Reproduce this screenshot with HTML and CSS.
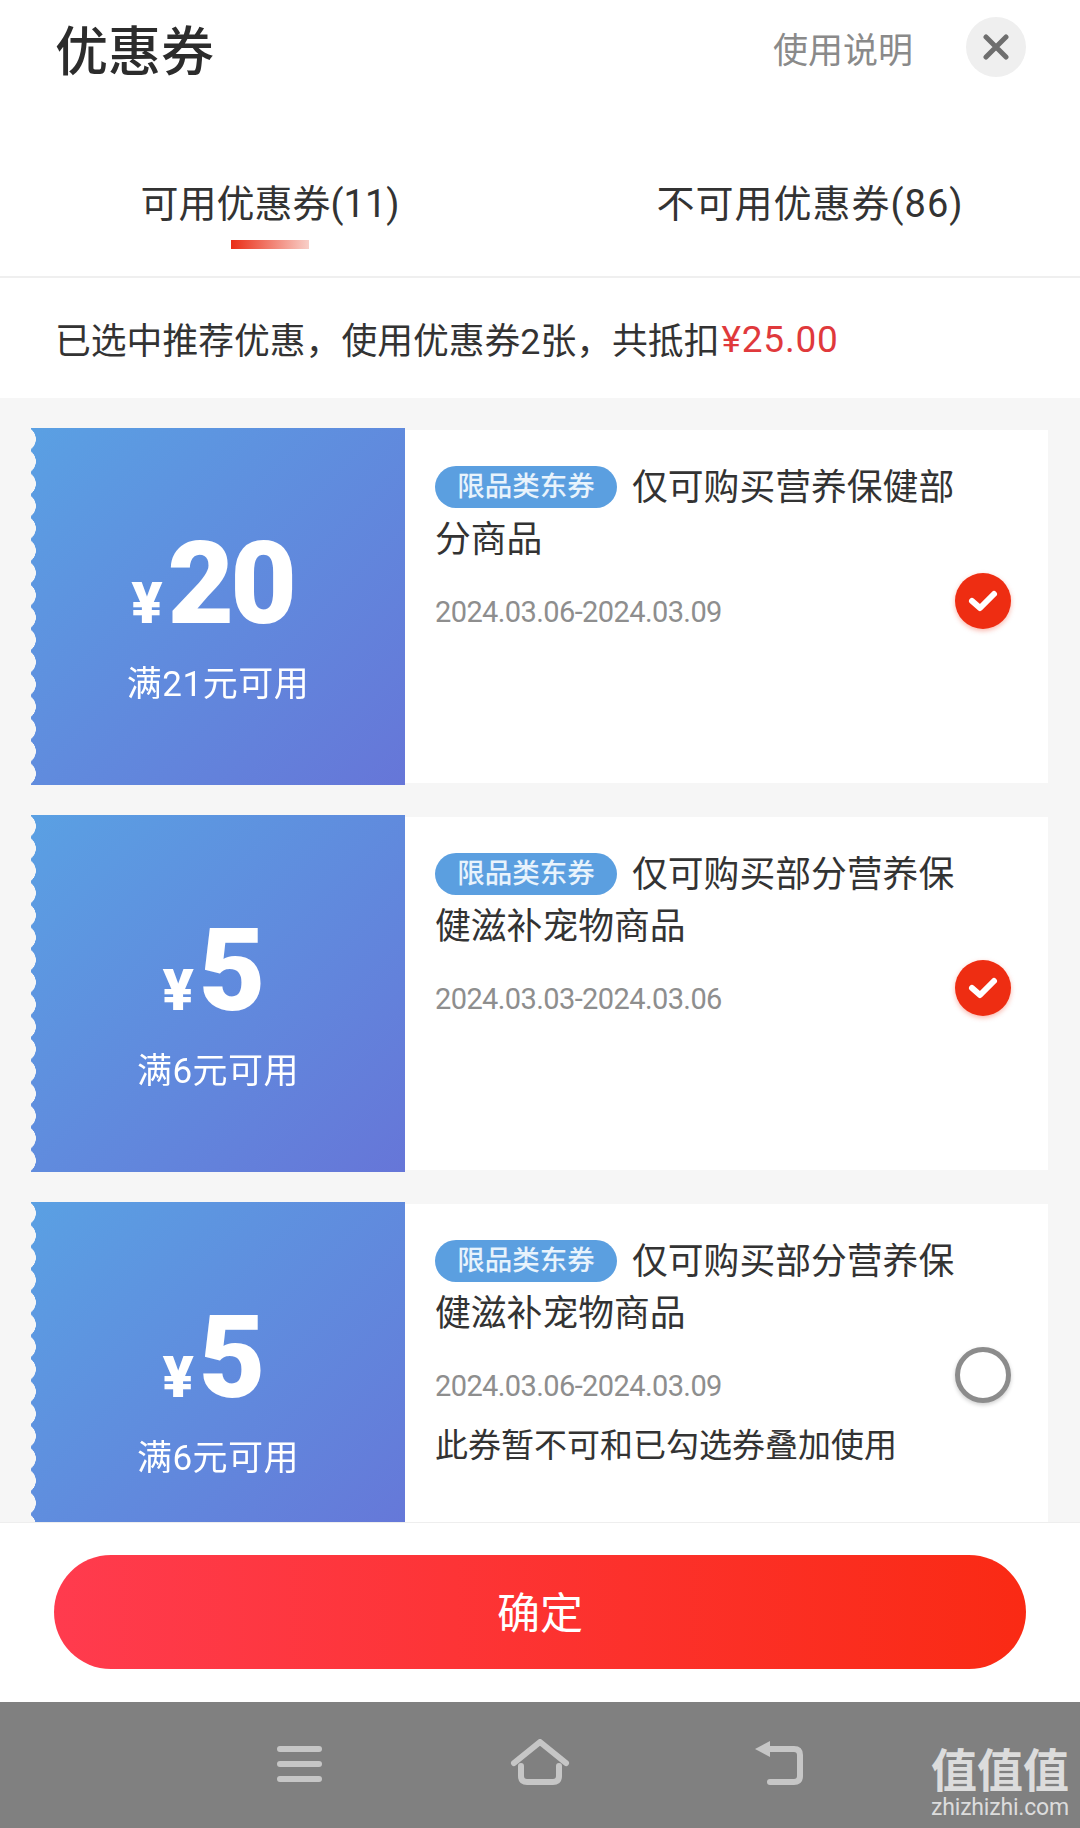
FILE: index.html
```html
<!DOCTYPE html>
<html lang="zh-CN">
<head>
    <meta charset="UTF-8">
    <meta name="viewport" content="width=device-width, initial-scale=1.0">
    <title>优惠券</title>
    <link rel="stylesheet" href="styles.css">
</head>
<body>

    <div class="page">
        <div class="header">
            <h1>优惠券</h1>
            <span class="help">使用说明</span>
            <span class="close">
                <svg width="28" height="26" viewBox="0 0 28 26"><path d="M4 3 L24 23 M24 3 L4 23" stroke="#6e6e6e" stroke-width="5" stroke-linecap="round" fill="none"/></svg>
            </span>
        </div>

        <div class="tabs">
            <div class="tab active">可用优惠券(11)</div>
            <div class="tab wide">不可用优惠券(86)</div>
        </div>

        <div class="summary">已选中推荐优惠，使用优惠券2张，共抵扣<span class="red">¥25.00</span></div>

        <div class="list">
            <div class="coupon">
                <div class="stub">
                    <div class="amount"><span class="yen">¥</span>20</div>
                    <div class="cond">满21元可用</div>
                </div>
                <div class="info">
                    <div class="title"><span class="tag">限品类东券</span>仅可购买营养保健部分商品</div>
                    <div class="date">2024.03.06-2024.03.09</div>
                    <span class="check on">
                        <svg width="32" height="26" viewBox="0 0 32 26"><path d="M5 13 L13 20 L27 6" stroke="#fff" stroke-width="6" stroke-linecap="round" stroke-linejoin="round" fill="none"/></svg>
                    </span>
                </div>
            </div>

            <div class="coupon">
                <div class="stub">
                    <div class="amount"><span class="yen">¥</span>5</div>
                    <div class="cond">满6元可用</div>
                </div>
                <div class="info">
                    <div class="title"><span class="tag">限品类东券</span>仅可购买部分营养保健滋补宠物商品</div>
                    <div class="date">2024.03.03-2024.03.06</div>
                    <span class="check on">
                        <svg width="32" height="26" viewBox="0 0 32 26"><path d="M5 13 L13 20 L27 6" stroke="#fff" stroke-width="6" stroke-linecap="round" stroke-linejoin="round" fill="none"/></svg>
                    </span>
                </div>
            </div>

            <div class="coupon">
                <div class="stub">
                    <div class="amount"><span class="yen">¥</span>5</div>
                    <div class="cond">满6元可用</div>
                </div>
                <div class="info">
                    <div class="title"><span class="tag">限品类东券</span>仅可购买部分营养保健滋补宠物商品</div>
                    <div class="date">2024.03.06-2024.03.09</div>
                    <div class="note">此券暂不可和已勾选券叠加使用</div>
                    <span class="check"></span>
                </div>
            </div>
        </div>

        <div class="footer">
            <button class="confirm">确定</button>
        </div>

        <div class="nav">
            <svg width="60" height="50" viewBox="0 0 60 50"><path d="M10 10 H49 M10 25 H49 M10 40 H49" stroke="#c6c6c6" stroke-width="6" stroke-linecap="round" fill="none"/></svg>
            <svg width="60" height="50" viewBox="0 0 60 50"><path d="M4 24 L30 3 L56 24 M11 27 V37 Q11 43 17 43 H43 Q49 43 49 37 V27" stroke="#c6c6c6" stroke-width="6" stroke-linecap="round" stroke-linejoin="round" fill="none"/></svg>
            <svg width="60" height="50" viewBox="0 0 60 50"><path d="M20 10 H44 Q50 10 50 16 V37 Q50 43 44 43 H20" stroke="#c6c6c6" stroke-width="6" stroke-linecap="round" fill="none"/><path d="M5 10 L20 2 V18 Z" fill="#c6c6c6"/></svg>
        </div>

        <div class="watermark">
            <div class="wm-cn">值值值</div>
            <div class="wm-en">zhizhizhi.com</div>
        </div>
    </div>

</body>
</html>
```

FILE: styles.css
```css
* {
    box-sizing: border-box;
}

body {
    font-family: Roboto, 'Noto Sans CJK SC', sans-serif;
    margin: 0;
    padding: 0;
    color: #333;
    background-color: #fff;
}

.page {
    position: relative;
    width: 1080px;
    height: 1828px;
    display: flex;
    flex-direction: column;
    overflow: hidden;
}

.header {
    height: 100px;
    flex: none;
    display: flex;
    align-items: center;
    padding: 0 54px 0 55px;
}

.header h1 {
    margin: -4px 0 0;
    font-size: 53px;
    font-weight: 500;
    color: #2c2c2c;
    flex: 1;
}

.help {
    font-size: 35px;
    color: #8a8a8a;
    margin: -6px 53px 0 0;
}

.close {
    width: 60px;
    height: 60px;
    margin-top: -6px;
    border-radius: 50%;
    background-color: #efefef;
    display: flex;
    align-items: center;
    justify-content: center;
}

.tabs {
    height: 178px;
    flex: none;
    display: flex;
    border-bottom: 2px solid #efefef;
}

.tab {
    flex: 1;
    text-align: center;
    font-size: 38px;
    line-height: 56px;
    padding-top: 76px;
    color: #333;
    position: relative;
}

.tab.wide {
    letter-spacing: 1px;
}

.tab.active::after {
    content: "";
    position: absolute;
    left: 231px;
    top: 140px;
    width: 78px;
    height: 9px;
    background: linear-gradient(to right, #ea2d16, #f8cfc8);
}

.summary {
    height: 120px;
    flex: none;
    display: flex;
    align-items: center;
    padding-left: 55px;
    font-size: 35.8px;
    color: #333;
}

.red {
    color: #e0393c;
    font-size: 37px;
    letter-spacing: 0.8px;
    margin: 3px 0 0 2px;
}

.list {
    flex: 1;
    min-height: 0;
    overflow: hidden;
    background-color: #f6f6f6;
    padding: 30px 32px 0 31px;
}

.coupon {
    display: flex;
    height: 357px;
    margin-bottom: 30px;
}

.stub {
    width: 374px;
    flex: none;
    display: flex;
    flex-direction: column;
    align-items: center;
    color: #fff;
    padding-top: 97px;
    background: linear-gradient(135deg, #5aa0e3, #6676d8);
    -webkit-mask: linear-gradient(#000, #000) 6px 0 / 100% 100% no-repeat,
        radial-gradient(circle 13px at -8px 50%, transparent 97%, #000) 0 0 / 6px 22.3px repeat-y;
    mask: linear-gradient(#000, #000) 6px 0 / 100% 100% no-repeat,
        radial-gradient(circle 13px at -8px 50%, transparent 97%, #000) 0 0 / 6px 22.3px repeat-y;
}

.amount {
    font-size: 115px;
    font-weight: 900;
    line-height: 118px;
    letter-spacing: -4px;
    margin-right: 12px;
}

.yen {
    font-size: 58px;
    margin-right: 5px;
    letter-spacing: 0;
}

.cond {
    font-size: 35px;
    line-height: 50px;
    letter-spacing: 0.5px;
    margin-top: -2px;
}

.info {
    flex: 1;
    position: relative;
    margin: 2px 0;
    padding: 32px 82px 0 30px;
    background-color: #fff;
}

.title {
    font-size: 35.8px;
    line-height: 52px;
    color: #333;
}

.tag {
    display: inline-block;
    width: 182px;
    height: 42px;
    margin-right: 15px;
    border-radius: 21px;
    background-color: #5b9fe0;
    color: #e8f3fc;
    font-size: 27.5px;
    font-weight: 500;
    line-height: 42px;
    text-align: center;
    vertical-align: 4px;
}

.date {
    font-size: 29px;
    line-height: 40px;
    letter-spacing: -0.6px;
    color: #8e8e8e;
    margin-top: 26px;
}

.note {
    font-size: 33px;
    line-height: 48px;
    color: #333;
    margin-top: 16px;
}

.check {
    position: absolute;
    right: 37px;
    top: 143px;
    width: 56px;
    height: 56px;
    border-radius: 50%;
    background-color: #fff;
    border: 5px solid #8c8c8c;
    box-shadow: 0 2px 4px rgba(0, 0, 0, 0.2);
    display: flex;
    align-items: center;
    justify-content: center;
}

.check.on {
    background-color: #ee2d12;
    border: none;
    box-shadow: 0 2px 5px rgba(238, 45, 18, 0.35);
}

.footer {
    height: 180px;
    flex: none;
    position: relative;
    background-color: #fff;
    border-top: 1px solid #eeeeee;
    padding: 32px 54px 0;
}

.confirm {
    display: block;
    width: 100%;
    height: 114px;
    padding: 0 0 4px;
    border: none;
    border-radius: 57px;
    background: linear-gradient(to right, #ff3b4e, #fa2a14);
    color: #fff;
    font-family: inherit;
    font-size: 43px;
    font-weight: 400;
}

.nav {
    height: 126px;
    flex: none;
    background-color: #808080;
    display: flex;
    align-items: center;
    justify-content: center;
    gap: 180px;
    padding-bottom: 2px;
}

.watermark {
    position: absolute;
    right: 10px;
    bottom: 8px;
    width: 140px;
    color: #dcdcdc;
    text-align: center;
    white-space: nowrap;
}

.wm-cn {
    font-size: 46px;
    line-height: 50px;
    font-weight: 700;
}

.wm-en {
    font-size: 23px;
    line-height: 24px;
    letter-spacing: -0.2px;
}
```
